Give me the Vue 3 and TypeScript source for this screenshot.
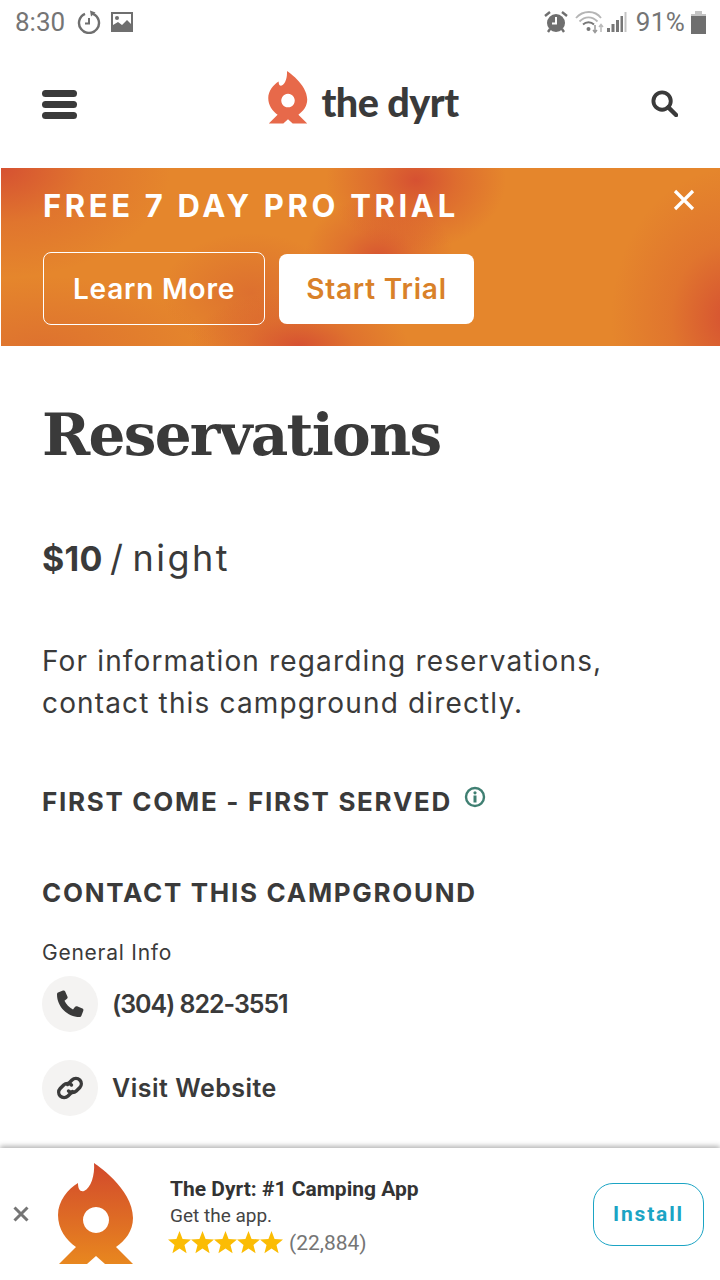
<script setup lang="ts">
const stars: number[] = [0, 1, 2, 3, 4];
</script>

<template>
  <div class="page">
    <div class="status">
      <div class="st-left">
        <span class="time">8:30</span>
        <svg class="si" width="24" height="24" viewBox="0 0 24 24"><path d="M8 3.800A10 10 0 1 0 16 3.800" fill="none" stroke="#6f6f6f" stroke-width="2.400"/><path d="M13 0.500 L18.500 2.500 L14 6.500Z" fill="#6f6f6f"/><path d="M12 8v5.500H8" fill="none" stroke="#6f6f6f" stroke-width="2"/></svg>
        <svg class="si2" width="22" height="20" viewBox="0 0 22 20"><path fill-rule="evenodd" d="M0 0h22v20H0z M2 2v11l5-3 4 3 5-5 4 4V2z" fill="#6f6f6f"/><circle cx="6" cy="6" r="2" fill="#6f6f6f"/></svg>
      </div>
      <div class="st-right">
        <svg width="24" height="24" viewBox="0 0 24 24"><circle cx="12" cy="13" r="9" fill="#6f6f6f"/><path d="M12 7v6.500H8" fill="none" stroke="#fff" stroke-width="2"/><path d="M1 6 6 2M23 6 18 2M4 22l2-3M20 22l-2-3" stroke="#6f6f6f" stroke-width="2.400"/></svg>
        <svg class="wifi" width="30" height="24" viewBox="0 0 30 24"><path d="M1 8C8 0 20 0 26 8M4.500 11.500C10 6 17 6 22.500 11.500" fill="none" stroke="#b5b5b5" stroke-width="1.800"/><path d="M8 14.500C11 11.500 16 11.500 19 14.500" fill="none" stroke="#777" stroke-width="1.800"/><circle cx="13.500" cy="19" r="2" fill="#777"/><path d="M20 15v7M18 20l2 2.500 2-2.500" fill="none" stroke="#999" stroke-width="1.500"/><path d="M26 22v-7M24 17l2-2.500 2 2.500" fill="none" stroke="#bbb" stroke-width="1.500"/></svg>
        <svg class="sig" width="20" height="24" viewBox="0 0 20 24"><path d="M0 18h3v4H0zM4.500 14h3v8h-3zM9 10h3v12H9z" fill="#777"/><path d="M13.500 6h2.500v16h-2.500z" fill="#777"/><path d="M17.500 2h2v20h-2z" fill="#c4c4c4"/></svg>
        <span class="pct">91%</span>
        <svg class="bat" width="15" height="23" viewBox="0 0 15 23"><path d="M4 0h7v3H4z" fill="#c4c4c4"/><path d="M0 3h15v3H0z" fill="#c4c4c4"/><path d="M0 5h15v18H0z" fill="#6f6f6f"/></svg>
      </div>
    </div>

    <header class="nav">
      <div class="burger"><i></i><i></i><i></i></div>
      <div class="logo">
        <svg width="40" height="53" viewBox="0 0 76 102"><path fill-rule="evenodd" fill="#e7694a" d="M36 0C36 0 75 25 75 55C75 68 67 78 58 84L75 101L47 101L38 93L29 101L1 101L18 84C8 77 0 66 0 52C0 38 10 26 20 20C20 26 22 29 26 28C33 25 37 12 36 0ZM38 44a13 13 0 1 0 .01 0Z"/></svg>
        <span class="wordmark">the dyrt</span>
      </div>
      <svg class="search" width="27" height="27" viewBox="0 0 28 28"><circle cx="11.500" cy="11.500" r="9" fill="none" stroke="#3a3a3a" stroke-width="4"/><path d="M18 18l8 8" stroke="#3a3a3a" stroke-width="4.500" stroke-linecap="round"/></svg>
    </header>

    <section class="banner">
      <div class="banner-title">FREE 7 DAY PRO TRIAL</div>
      <svg class="close" width="22" height="22" viewBox="0 0 22 22"><path d="M2 2l18 18M20 2L2 20" stroke="#fff" stroke-width="3.200"/></svg>
      <div class="banner-btns">
        <div class="btn outline">Learn More</div>
        <div class="btn solid">Start Trial</div>
      </div>
    </section>

    <main class="content">
      <h1>Reservations</h1>
      <p class="price"><b>$10</b> / night</p>
      <p class="info">For information regarding reservations,<br />contact this campground directly.</p>
      <h2 class="fcfs">FIRST COME - FIRST SERVED
        <svg class="i" width="22" height="22" viewBox="0 0 22 22"><circle cx="11" cy="11" r="9" fill="none" stroke="#3f7f72" stroke-width="2.400"/><circle cx="11" cy="6.800" r="1.600" fill="#3f7f72"/><path d="M11 9.500v7" stroke="#3f7f72" stroke-width="3"/></svg>
      </h2>
      <h2 class="contact">CONTACT THIS CAMPGROUND</h2>
      <div class="gen">General Info</div>
      <div class="row phone">
        <span class="circle"><svg width="30" height="30" viewBox="0 0 30 30"><path fill="#3a3a3a" d="M3 3.500 8 1.500c1 -.3 1.800 0 2.200 .9l2.300 5.300c.3 .8 .1 1.500 -.5 2L9.500 11.800c1.600 3.500 4.700 6.700 8.500 8.600l2.100-2.600c.5-.6 1.300-.8 2-.5l5.300 2.300c.9 .4 1.200 1.200 .9 2.100l-1.900 5c-.3 .8-1 1.300-1.900 1.300C12.500 28 2 17.400 2 5.400c0-.9 .4-1.600 1-1.900Z"/></svg></span>
        <span class="num">(304) 822-3551</span>
      </div>
      <div class="row web">
        <span class="circle"><svg width="30" height="30" viewBox="0 0 30 30"><g fill="none" stroke="#3a3a3a" stroke-width="3.400" stroke-linecap="round"><path d="M12.500 11.500 17 7a5.500 5.500 0 0 1 7.800 0 5.500 5.500 0 0 1 0 7.500l-3.500 3.500a5.500 5.500 0 0 1-7.800 0"/><path d="M17.500 18.500 13 23a5.500 5.500 0 0 1-7.800 0 5.500 5.500 0 0 1 0-7.500l3.500-3.500a5.500 5.500 0 0 1 7.800 0"/></g></svg></span>
        <span>Visit Website</span>
      </div>
    </main>

    <aside class="ad">
      <svg class="ad-x" width="16" height="16" viewBox="0 0 16 16"><path d="M1.500 1.500l13 13M14.500 1.500l-13 13" stroke="#757575" stroke-width="3"/></svg>
      <svg class="ad-logo" width="76" height="102" viewBox="0 0 76 102">
        <defs><linearGradient id="fl" x1="0" y1="0" x2="0" y2="1"><stop offset="0" stop-color="#d2492c"/><stop offset="1" stop-color="#e8871f"/></linearGradient></defs>
        <path fill-rule="evenodd" fill="url(#fl)" d="M36 0C36 0 75 25 75 55C75 68 67 78 58 84L75 101L47 101L38 93L29 101L1 101L18 84C8 77 0 66 0 52C0 38 10 26 20 20C20 26 22 29 26 28C33 25 37 12 36 0ZM38 44a13 13 0 1 0 .01 0Z"/>
      </svg>
      <div class="ad-text">
        <div class="ad-title">The Dyrt: #1 Camping App</div>
        <div class="ad-sub">Get the app.</div>
        <div class="ad-rate">
          <svg v-for="s in stars" :key="s" width="23" height="23" viewBox="0 0 24 24"><path fill="#fbbc04" d="M12 0l3.200 8.300 8.800.6-6.800 5.600 2.200 8.700L12 18.300l-7.400 4.900 2.200-8.700L0 8.900l8.800-.6z"/></svg>
          <span class="count">(22,884)</span>
        </div>
      </div>
      <div class="install">Install</div>
    </aside>
  </div>
</template>

<style scoped>
.page {
  position: relative;
  width: 720px;
  height: 1280px;
  overflow: hidden;
  background: #fff;
  color: #3a3a3a;
  font-family: Inter, "Open Sans", sans-serif;
}
.status {
  height: 44px;
  display: flex;
  justify-content: space-between;
  align-items: center;
  padding: 0 14px 0 15px;
  color: #757575;
  font-family: Roboto, sans-serif;
  font-size: 26px;
}
.st-left, .st-right { display: flex; align-items: center; }
.time { margin-right: 12px; }
.si2 { margin-left: 10px; }
.wifi { margin-left: 7px; margin-right: 2px; }
.sig { margin-right: 9px; }
.pct { margin-right: 6px; letter-spacing: .3px; }
.nav {
  height: 124px;
  position: relative;
  display: flex;
  align-items: center;
  justify-content: space-between;
  padding: 0 42px 0 42px;
}
.burger { display: flex; flex-direction: column; gap: 4px; width: 35px; margin-top: -4px; }
.burger i { height: 7px; border-radius: 4px; background: #3a3a3a; display: block; }
.logo { display: flex; align-items: flex-start; gap: 13px; margin-left: -1px; margin-top: -14px; }
.wordmark { font-family: Lato, sans-serif; font-weight: 900; font-size: 39.500px; color: #3a3a3a; letter-spacing: -0.5px; line-height: 50px; margin-top: 6px; }
.search { margin-top: -5px; }
.banner {
  position: relative;
  height: 178px;
  box-sizing: border-box;
  padding: 19px 0 0 43px;
  margin-left: 1px;
  background:
    radial-gradient(ellipse 90px 70px at 415px 12px, rgba(213,78,50,.95), rgba(213,78,50,.45) 45%, rgba(213,78,50,0) 100%),
    radial-gradient(ellipse 75px 65px at 378px 92px, rgba(213,78,50,.9), rgba(213,78,50,.35) 50%, rgba(213,78,50,0) 100%),
    radial-gradient(ellipse 110px 55px at 298px 178px, rgba(213,78,50,.95), rgba(213,78,50,.35) 50%, rgba(213,78,50,0) 100%),
    radial-gradient(ellipse 90px 60px at 250px 125px, rgba(213,90,50,.5), rgba(213,80,50,0) 100%),
    radial-gradient(ellipse 170px 110px at 0 0, rgba(213,78,50,.95), rgba(213,78,50,.3) 50%, rgba(213,78,50,0) 100%),
    radial-gradient(ellipse 120px 150px at 730px 150px, rgba(213,78,50,.95), rgba(213,78,50,.3) 50%, rgba(213,78,50,0) 100%),
    radial-gradient(ellipse 170px 70px at 40px 178px, rgba(213,90,50,.45), rgba(213,80,50,0) 100%),
    #e5862c;
  color: #fff;
}
.banner-title { font-size: 31px; font-weight: 700; letter-spacing: 3.650px; line-height: 38px; white-space: nowrap; margin-left: -1px; }
.close { position: absolute; right: 25px; top: 21px; }
.banner-btns { display: flex; align-items: center; gap: 14px; margin-top: 27px; margin-left: -1px; }
.btn { display: flex; align-items: center; justify-content: center; border-radius: 8px; font-size: 28px; font-weight: 600; letter-spacing: .8px; box-sizing: border-box; }
.outline { width: 222px; height: 73px; border: 1px solid #fff; color: #fff; }
.solid { width: 195px; height: 70px; background: #fff; color: #d98129; }
.content { padding: 0 42px; }
h1 {
  margin: 48px 0 0;
  font-family: "DejaVu Serif", serif;
  font-weight: 700;
  font-size: 58px;
  line-height: 82px;
  color: #3a3a3a;
  letter-spacing: -1.700px;
  white-space: nowrap;
}
.price { margin: 60px 0 0; font-size: 36px; line-height: 44px; letter-spacing: 2.500px; word-spacing: -5.500px; }
.price b { font-size: 34px; font-weight: 700; letter-spacing: .3px; }
.info { margin: 59px 0 0; font-size: 28px; line-height: 42px; letter-spacing: 1.150px; white-space: nowrap; }
h2 { margin: 0; font-size: 26px; font-weight: 700; letter-spacing: 1.700px; line-height: 32px; white-space: nowrap; }
.fcfs { margin-top: 62px; position: relative; }
.i { position: absolute; left: 422px; top: 0; }
.contact { margin-top: 59px; }
.gen { margin-top: 31px; font-size: 21px; line-height: 26px; letter-spacing: .75px; }
.row { display: flex; align-items: center; gap: 14px; font-size: 25px; font-weight: 600; letter-spacing: .5px; white-space: nowrap; }
.num { letter-spacing: -1.070px; }
.phone { margin-top: 10px; }
.web { margin-top: 28px; }
.circle { width: 56px; height: 56px; border-radius: 50%; background: #f4f3f2; display: flex; align-items: center; justify-content: center; flex: none; }
.ad {
  position: absolute;
  left: 0; right: 0; bottom: 0;
  height: 132px;
  background: #fff;
  box-shadow: 0 -2px 5px rgba(0,0,0,.3);
  display: flex;
  align-items: center;
  font-family: Roboto, sans-serif;
  box-sizing: border-box;
  padding: 0 16px 0 13px;
}
.ad-x { flex: none; }
.ad-logo { margin-left: 29px; flex: none; }
.ad-text { margin-left: 36px; flex: 1; padding-top: 3px; }
.ad-title { font-size: 21px; font-weight: 700; color: #333; line-height: 28px; }
.ad-sub { font-size: 19px; color: #444; line-height: 26px; }
.ad-rate { display: flex; align-items: center; margin-left: -2px; line-height: 28px; }
.count { font-size: 21px; color: #757575; margin-left: 6px; }
.install {
  width: 111px; height: 63px; box-sizing: border-box;
  border: 1.500px solid #1ba4c4; border-radius: 20px;
  color: #1ba4c4; font-size: 21px; font-weight: 700; letter-spacing: 1.800px;
  display: flex; align-items: center; justify-content: center;
}
</style>
